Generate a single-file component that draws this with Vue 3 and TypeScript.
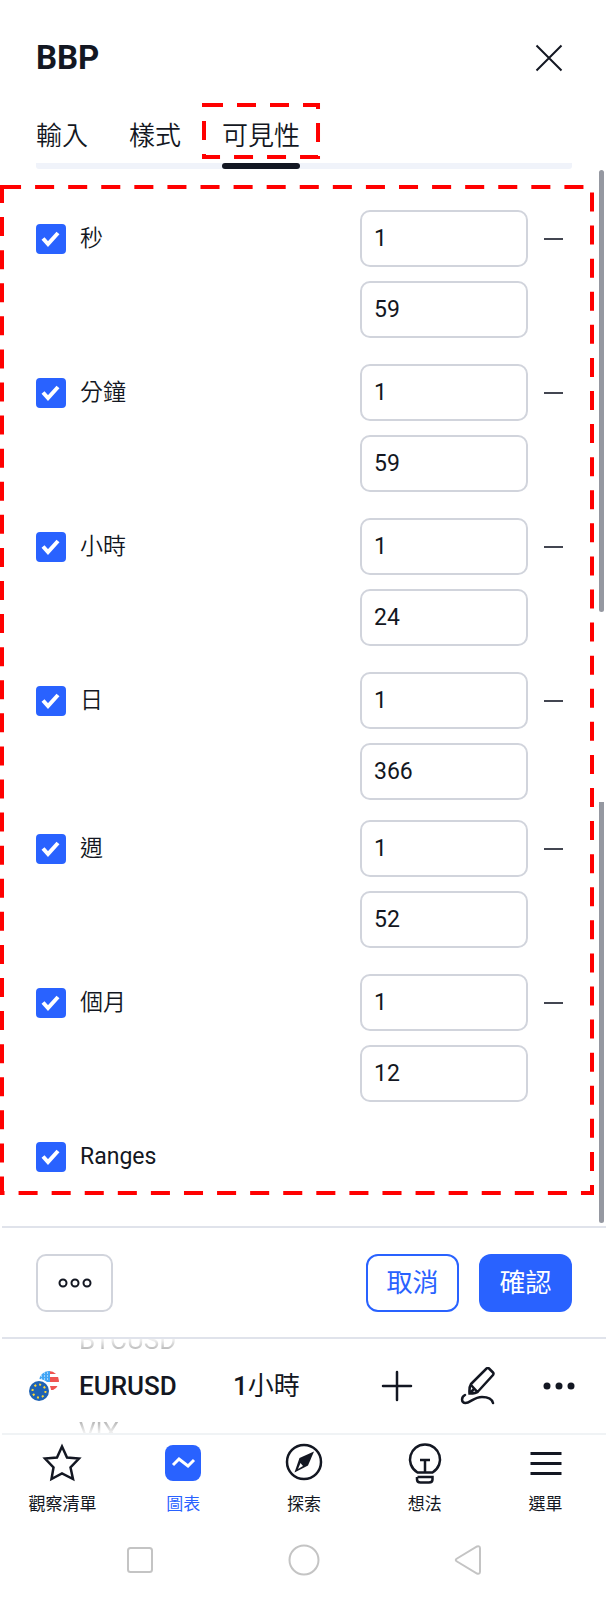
<script setup lang="ts">
import { reactive, ref } from 'vue'

interface Row {
  id: string
  label: string
  on: boolean
  from?: string
  to?: string
  tight?: boolean
}

const tabs = ['輸入', '樣式', '可見性']
const activeTab = ref('可見性')

const rows = reactive<Row[]>([
  { id: 'seconds', label: '秒', on: true, from: '1', to: '59' },
  { id: 'minutes', label: '分鐘', on: true, from: '1', to: '59' },
  { id: 'hours', label: '小時', on: true, from: '1', to: '24' },
  { id: 'days', label: '日', on: true, from: '1', to: '366', tight: true },
  { id: 'weeks', label: '週', on: true, from: '1', to: '52' },
  { id: 'months', label: '個月', on: true, from: '1', to: '12' },
  { id: 'ranges', label: 'Ranges', on: true },
])
</script>

<template>
  <div class="screen">
    <header class="head">
      <h1>BBP</h1>
      <button class="close" type="button" aria-label="關閉">
        <svg width="28" height="28" viewBox="0 0 28 28"><path d="M1.5 1.5l25 25M26.5 1.5l-25 25" /></svg>
      </button>
    </header>

    <nav class="tabs">
      <button
        v-for="t in tabs"
        :key="t"
        type="button"
        :class="['tab', { active: t === activeTab }]"
        @click="activeTab = t"
      >
        {{ t }}
        <svg v-if="t === activeTab" class="mark" aria-hidden="true"><rect class="dash" /></svg>
      </button>
    </nav>

    <main class="body">
      <div class="scroll" aria-hidden="true"><i></i><i class="lower"></i></div>
      <section class="panel">
        <svg class="mark" aria-hidden="true"><rect class="dash" pathLength="3184" /></svg>
        <div v-for="r in rows" :key="r.id" :class="['row', { tight: r.tight }]">
          <label :class="['check', { latin: !r.from }]">
            <input v-model="r.on" type="checkbox" />
            <svg class="tick" viewBox="0 0 30 30" aria-hidden="true"><path d="M7 14.500l5 5.500 10-11" /></svg>
            <span>{{ r.label }}</span>
          </label>
          <div v-if="r.from" class="range">
            <input v-model="r.from" type="text" :aria-label="r.label + ' 最小'" />
            <i class="sep"></i>
            <input v-model="r.to" type="text" :aria-label="r.label + ' 最大'" />
          </div>
        </div>
      </section>
    </main>

    <footer class="actions">
      <button class="more" type="button" aria-label="預設">
        <svg width="34" height="12" viewBox="0 0 34 12"><circle cx="5" cy="6" r="3.5" /><circle cx="17" cy="6" r="3.5" /><circle cx="29" cy="6" r="3.5" /></svg>
      </button>
      <button class="cancel" type="button">取消</button>
      <button class="ok" type="button">確認</button>
    </footer>

    <div class="symbol">
      <svg class="flags" width="32" height="32" viewBox="0 0 32 32" aria-hidden="true">
        <defs><clipPath id="us"><circle cx="21" cy="11" r="10" /></clipPath></defs>
        <g clip-path="url(#us)">
          <path fill="#fff" d="M10 0h22v22H10z" />
          <path fill="#ef5350" d="M21 1h11v3H21zM21 7h11v5H21zM10 16h22v4H10z" />
          <path fill="#42a5f5" d="M10 0h12v12H10z" />
          <path class="stars" d="M13 3h8M13 6h8M13 9h8" />
        </g>
        <circle cx="11" cy="21" r="12" fill="#fff" />
        <circle cx="11" cy="21" r="10" fill="#1e62b4" />
        <circle class="eu" cx="11" cy="21" r="6.5" />
      </svg>
      <div class="picker">
        <span class="ghost prev">BTCUSD</span>
        <strong>EURUSD</strong>
        <span class="ghost next">VIX</span>
      </div>
      <button class="interval" type="button"><b>1</b>小時</button>
      <div class="tools">
        <button type="button" aria-label="新增">
          <svg width="38" height="38" viewBox="0 0 38 38"><path d="M19 5v28M5 19h28" /></svg>
        </button>
        <button type="button" aria-label="繪圖">
          <svg width="38" height="38" viewBox="0 0 38 38"><path d="M12 17L27.500 1.500Q29 .5 30 1.500L34 5.500Q35 6.500 34 8L19 24.500Q17 26.500 10.500 26.500Q10 20 12 17ZM12 18L18.500 25M11 26L14.500 22.500M6 28C2 30 2 36 6.500 36C11 36 15 30 23 30C30 30 33 32 34 36" /></svg>
        </button>
        <button type="button" aria-label="更多">
          <svg class="dots" width="38" height="38" viewBox="0 0 38 38"><circle cx="7" cy="19" r="3.500" /><circle cx="19" cy="19" r="3.500" /><circle cx="31" cy="19" r="3.500" /></svg>
        </button>
      </div>
    </div>

    <nav class="bottom">
      <a href="#watchlist">
        <svg width="40" height="42" viewBox="0 0 40 42"><path d="M20 3.500L25 14.500L37 15.500L28.500 24.500L31 36L20 30.500L9.500 36L11.500 24.500L3 15.500L15 14.500Z" /></svg>
        觀察清單
      </a>
      <a href="#chart" class="on">
        <svg width="40" height="42" viewBox="0 0 40 42"><rect x="2" y="2" width="36" height="36" rx="8" /><path d="M10 22l6-6 9 7 6-6" /></svg>
        圖表
      </a>
      <a href="#explore">
        <svg width="40" height="42" viewBox="0 0 40 42"><circle cx="20" cy="19" r="17" /><path class="solid" d="M30 8.500L24 22.500L10.500 29.500L15.500 15Z" /><path class="hollow" d="M16.500 20L14 26L19 23Z" /></svg>
        探索
      </a>
      <a href="#ideas">
        <svg width="40" height="42" viewBox="0 0 40 42"><path d="M12.500 29.500C-1 21 5 1.500 20 1.500S41 21 27.500 29.500ZM15 17h10M20 17V29M12.500 34h15v2.500q0 3-3.500 3h-8.500q-3.500 0-3.500-3V34" /></svg>
        想法
      </a>
      <a href="#menu">
        <svg class="menu" width="40" height="42" viewBox="0 0 40 42"><path d="M4.500 10.500h31M4.500 20.500h31M4.500 30.500h31" /></svg>
        選單
      </a>
    </nav>

    <div class="system">
      <button type="button" aria-label="最近"><svg width="32" height="32" viewBox="0 0 32 32"><rect x="4" y="4" width="24" height="24" rx="2.500" /></svg></button>
      <button type="button" aria-label="主畫面"><svg width="32" height="32" viewBox="0 0 32 32"><circle cx="16" cy="16" r="14.500" /></svg></button>
      <button type="button" aria-label="返回"><svg width="32" height="32" viewBox="0 0 32 32"><path d="M5 14.500L25 2.500Q28 1.500 28 4.500V27.500Q28 30.500 25 29.500L5 17.500Q2.500 16 5 14.500Z" /></svg></button>
    </div>
  </div>
</template>

<style>
body {
  margin: 0;
  background: #fff;
}
</style>

<style scoped>
.screen {
  font-family: Roboto, "Noto Sans CJK TC", sans-serif;
  color: #131722;
}
.screen * {
  box-sizing: border-box;
}
button {
  font: inherit;
  color: inherit;
  background: none;
  border: 0;
  padding: 0;
}
svg {
  display: block;
  fill: none;
  stroke: #131722;
  stroke-width: 2;
}
.head {
  display: flex;
  align-items: center;
  justify-content: space-between;
  padding: 38px 43px 0 36px;
}
h1 {
  margin: 0;
  font-size: 33px;
  line-height: 40px;
  font-weight: 700;
}
.tabs {
  display: flex;
  gap: 41px;
  margin: 33px 34px 0 36px;
  height: 58px;
  border-bottom: 6px solid #f0f3fa;
  border-radius: 3px;
}
.tab {
  position: relative;
  height: 58px;
  font-size: 26px;
  line-height: 50px;
  padding-bottom: 8px;
  font-weight: 350;
}
.tab.active::after {
  content: "";
  position: absolute;
  left: 0;
  right: 0;
  bottom: 0;
  height: 6px;
  border-radius: 3px;
  background: #131722;
}
.mark {
  position: absolute;
  inset: 0;
  width: 100%;
  height: 100%;
  overflow: visible;
  pointer-events: none;
}
.tab .mark {
  inset: -8px -20px 10px;
  width: calc(100% + 40px);
  height: calc(100% - 2px);
}
.dash {
  x: 2px;
  y: 2px;
  width: calc(100% - 4px);
  height: calc(100% - 4px);
  stroke: #f00;
  stroke-width: 4;
  stroke-dasharray: 19 14;
}
.body {
  position: relative;
  padding: 16px 12px 31px 0;
}
.scroll {
  position: absolute;
  top: 1px;
  right: 2px;
  bottom: 3px;
  width: 5px;
  display: flex;
  flex-direction: column;
  justify-content: space-between;
}
.scroll i {
  height: 42%;
  border-radius: 3px;
  background: #9598a1;
}
.scroll .lower {
  height: 40%;
  border-radius: 0 0 3px 3px;
}
.panel {
  position: relative;
  padding: 25px 28px 10px 36px;
}
.row {
  display: flex;
  align-items: flex-start;
  justify-content: space-between;
  margin-bottom: 26px;
}
.row.tight {
  margin-bottom: 20px;
}
.row:last-child {
  margin-bottom: 0;
}
.check {
  display: flex;
  align-items: center;
  height: 57px;
  font-size: 23px;
  line-height: 30px;
  font-weight: 350;
  position: relative;
}
.check.latin {
  font-weight: 400;
}
.check input {
  appearance: none;
  width: 30px;
  height: 30px;
  margin: 0 14px 0 0;
  border-radius: 4px;
  border: 2px solid #d1d4dc;
}
.check input:checked {
  background: #2962ff;
  border-color: #2962ff;
}
.tick {
  position: absolute;
  left: 0;
  width: 30px;
  height: 30px;
  stroke: #fff;
  stroke-width: 4;
}
.range {
  display: grid;
  grid-template-columns: 168px 19px;
  column-gap: 16px;
  row-gap: 14px;
  align-items: center;
  margin-right: 3px;
}
.range input {
  width: 100%;
  height: 57px;
  padding: 0 12px;
  font: inherit;
  font-size: 23px;
  color: inherit;
  background: #fff;
  border: 2px solid #d1d4dc;
  border-radius: 10px;
}
.sep {
  height: 2px;
  background: #434651;
}
.actions {
  display: flex;
  gap: 20px;
  margin-left: 2px;
  padding: 26px 34px 25px;
  border-top: 2px solid #e0e3eb;
  border-bottom: 2px solid #e0e3eb;
}
.actions button {
  width: 93px;
  height: 58px;
  border-radius: 12px;
  font-size: 26px;
  line-height: 30px;
}
.actions .more {
  width: 77px;
  margin-right: auto;
  border: 2px solid #d1d4dc;
  border-radius: 10px;
  display: flex;
  align-items: center;
  justify-content: center;
}
.actions .cancel {
  color: #2962ff;
  border: 2px solid #2962ff;
}
.actions .ok {
  color: #fff;
  background: #2962ff;
}
.symbol {
  display: flex;
  align-items: center;
  height: 96px;
  margin-left: 2px;
  padding: 0 28px 0 26px;
  border-bottom: 2px solid #f0f3f5;
}
.flags {
  flex: none;
  stroke: none;
}
.stars {
  stroke: #fff;
  stroke-width: 1;
  stroke-dasharray: 1 2;
}
.eu {
  stroke: #fdd835;
  stroke-width: 2;
  stroke-dasharray: 2 3;
}
.picker {
  height: 94px;
  width: 173px;
  padding-left: 19px;
  overflow: hidden;
  display: flex;
  flex-direction: column;
  align-items: flex-start;
  justify-content: center;
  font-size: 26px;
  line-height: 46px;
}
.picker strong,
.interval b {
  font-weight: 500;
}
.ghost {
  flex: none;
  color: transparent;
  background-clip: text;
}
.prev {
  background-image: linear-gradient(#eee 50%, #bbb 70%);
}
.next {
  background-image: linear-gradient(#bbb 30%, #eee 50%);
}
.interval {
  font-size: 26px;
  line-height: 30px;
}
.tools {
  display: flex;
  gap: 43px;
  margin-left: auto;
}
.tools svg {
  stroke-width: 2.5;
  stroke-linecap: round;
}
.tools .dots {
  fill: #131722;
  stroke: none;
}
.bottom {
  display: grid;
  grid-template-columns: repeat(5, 1fr);
  margin-left: 2px;
  padding-top: 8px;
}
.bottom a {
  display: flex;
  flex-direction: column;
  align-items: center;
  font-size: 17px;
  line-height: 26px;
  gap: 6px;
  color: #131722;
  text-decoration: none;
}
.bottom svg {
  stroke-width: 2.5;
}
.bottom .solid {
  fill: #131722;
  stroke: none;
}
.bottom .hollow {
  fill: #fff;
  stroke: none;
}
.bottom .menu {
  stroke-width: 3;
}
.bottom .on {
  color: #2962ff;
}
.on rect {
  fill: #2962ff;
  stroke: none;
}
.on path {
  stroke: #fff;
  stroke-width: 3;
}
.system {
  display: flex;
  justify-content: center;
  gap: 132px;
  margin-left: 2px;
  padding: 27px 0 24px;
}
.system svg {
  stroke: #c4c4c4;
}
</style>
